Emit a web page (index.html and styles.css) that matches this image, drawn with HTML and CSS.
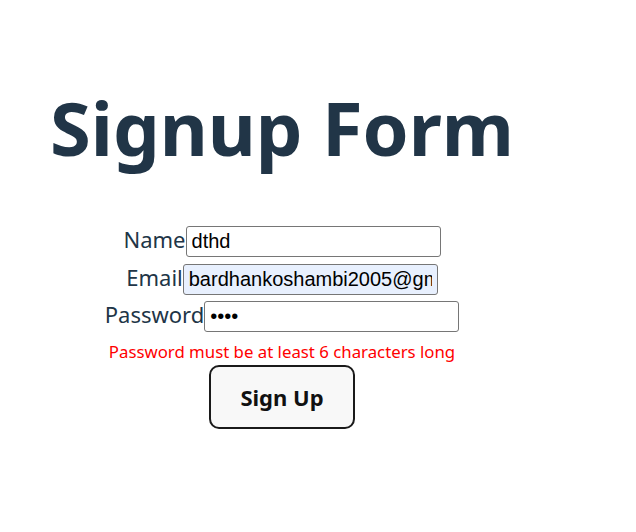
FILE: index.html
```html
<!DOCTYPE html>
<html lang="en">
<head>
<meta charset="utf-8">
<title>Signup Form</title>
<link rel="stylesheet" href="styles.css">
</head>
<body>
<div class="app">
  <h1 class="title">Signup Form</h1>
  <form class="form">
    <div class="row">
      <label class="label" for="name">Name</label>
      <input class="field" id="name" type="text" value="dthd">
    </div>
    <div class="row">
      <label class="label" for="email">Email</label>
      <input class="field field-filled" id="email" type="email" value="bardhankoshambi2005@gmail.com">
    </div>
    <div class="row">
      <label class="label" for="password">Password</label>
      <input class="field" id="password" type="password" value="abcd">
    </div>
    <p class="error">Password must be at least 6 characters long</p>
    <button class="submit" type="button">Sign Up</button>
  </form>
</div>
</body>
</html>
```
FILE: styles.css
```css
html, body {
  background: #ffffff;
}
body {
  margin: 8px;
  font-family: "Noto Sans", "Open Sans", sans-serif;
  color: #213547;
}
.app {
  width: 548px;
  text-align: center;
  padding-top: 70px;
}
.title {
  margin: 0;
  font-size: 74px;
  line-height: 100px;
  font-weight: 700;
  color: #213547;
}
.form {
  margin-top: 46px;
  display: flex;
  flex-direction: column;
  align-items: center;
}
.row {
  display: flex;
  align-items: baseline;
  height: 31px;
  margin-bottom: 6.5px;
}
.label {
  font-size: 22px;
  color: #213547;
}
.field {
  box-sizing: border-box;
  width: 255px;
  height: 31px;
  margin: 0;
  padding: 1px 5px;
  border: 1px solid #767676;
  border-radius: 3px;
  font-family: "Liberation Sans", Arial, sans-serif;
  font-size: 20px;
  color: #000;
  background: #fff;
}
.field-filled {
  background: #e8f0fe;
}
.error {
  margin: 3px 0 2px;
  font-size: 16.8px;
  color: #ff0000;
}
.submit {
  width: 146px;
  height: 64px;
  border: 2px solid #1a1a1a;
  border-radius: 10px;
  background: #f8f8f8;
  font-family: "Noto Sans", "Open Sans", sans-serif;
  font-size: 22px;
  font-weight: 700;
  color: #111;
  cursor: pointer;
}
```
